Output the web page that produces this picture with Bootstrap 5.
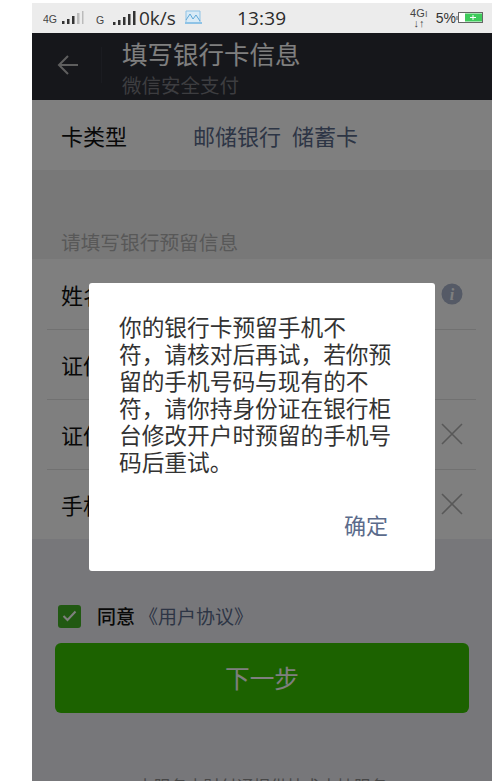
<!doctype html>
<html lang="zh"><head><meta charset="utf-8">
<link href="https://cdn.jsdelivr.net/npm/bootstrap@5.3.0/dist/css/bootstrap.min.css" rel="stylesheet">
<style>
html,body{height:781px;overflow:hidden;background:#fff}
body{font-family:"Noto Sans CJK SC","Liberation Sans",sans-serif}
.phone{width:460px;height:778px;margin:3px 0 0 32px;position:relative;overflow:hidden;background:#efeff4}
.stat{height:30px;background:#ececec;color:#333;padding:0 9px 0 11px}
.stat .net{font:400 19px/30px "Open Sans",sans-serif;color:#2f2f2f}
.stat .tm{font:400 19px/30px "Open Sans",sans-serif;color:#2a2a2a;margin-left:34px;letter-spacing:.2px}
.stat .pc{font:400 14px/1 "Liberation Sans",sans-serif;color:#333}
.stat .g4{font:400 11px/10px "Liberation Sans",sans-serif;color:#444}
.stage{height:748px;position:relative}
.top{height:67px;background:#2c2e37;color:#fff;padding-left:24px}
.top .bk{width:46px;height:36px;border-right:1px solid #363842;margin-right:20px;margin-top:-3px}
.heads{align-self:flex-start;margin-top:5px}
.ttl{font-size:25.5px;line-height:30px;color:#fff}
.sub{font-size:19.5px;line-height:30px;color:#7a7b80;margin-top:2px}
.rw{background:#fff;height:70px;font-size:22px;color:#111;padding:0 29px 0 29px}
.cardrow .bank{color:#5b6b8b;font-size:22px;margin-left:66px;word-spacing:6px}
.gap1{height:55px;background:#f0f0f0}
.hint{height:34px;padding:0 0 0 29px;background:#f0f0f0;color:#b0b0b0;font-size:19.7px;line-height:34px}
.rows{background:#fff}
.rows .rw+.rw{position:relative}
.rows .rw+.rw::before{content:"";position:absolute;left:15px;right:16px;top:0;border-top:1px solid #e2e2e2}
.gap2{height:65px}
.agr{padding-left:26px;height:24px;font-size:19px;color:#111}
.agr .lnk{color:#5b6b8b;font-size:19px;margin-left:4px}
.ck{width:23px;height:23px;border-radius:3px;background:#43b324;margin-right:16px}
.go{display:block;margin:15px 23px 0 23px;width:414px;height:70px;background:#38c400;color:#fff;font-size:24.7px;border:0;border-radius:6px}
.go:disabled{background:#38c400;color:#fff;opacity:1}
.foot{position:absolute;left:0;right:0;bottom:-17px;text-align:center;font-size:16.7px;line-height:24px;color:#8e8e8e}
.scrim{position:absolute;inset:0;background:rgba(0,0,0,.5)}
.dlg{position:absolute;left:57px;top:250px;width:346px;height:288px;background:#fff;border-radius:3px;padding:30px 30px 0 30px}
.dlg p{font-size:22.7px;line-height:27.1px;color:#333;margin:0;white-space:nowrap}
.dlg .ok{position:absolute;right:47px;bottom:32px;font-size:22px;line-height:30px;color:#5b6b8b;padding:0;border:0;background:none}
</style></head><body>
<div class="phone">
 <div class="stat d-flex align-items-center">
  <svg width="53" height="14" viewBox="0 0 53 14"><text x="0" y="12" font-family="Liberation Sans" font-size="10.500" fill="#444">4G</text><g fill="#333"><rect x="19" y="10" width="2.500" height="3"/><rect x="24" y="8" width="2.500" height="5"/><rect x="29" y="5" width="2.500" height="8"/></g><g fill="#bbb"><rect x="34" y="2" width="2.500" height="11"/><rect x="39" y="0" width="1.500" height="13"/></g></svg>
  <svg width="43" height="16" viewBox="0 0 43 16"><text x="0" y="14" font-family="Liberation Sans" font-size="10.500" fill="#444">G</text><g fill="#333"><rect x="17" y="12" width="2.500" height="3"/><rect x="22" y="10" width="2.500" height="5"/><rect x="27" y="7" width="2.500" height="8"/><rect x="32" y="4" width="2.500" height="11"/><rect x="37" y="1" width="2.500" height="14"/></g></svg>
  <span class="net">0k/s</span>
  <svg width="19" height="16" viewBox="0 0 19 16" class="ms-2"><path d="M2 1h14v12H2z" fill="#d8eaf6" stroke="#8fc3e6"/><path d="M2 10l4-6 3 5 3-4 4 6" fill="none" stroke="#5fa8d8"/><path d="M1 13h17" stroke="#8fc3e6" stroke-width="2"/></svg>
  <span class="tm">13:39</span>
  <div class="ms-auto d-flex align-items-center">
   <div class="g4 me-2 text-center"><div>4G<span class="opacity-75">ı</span></div><div>↓↑</div></div>
   <span class="pc">5%</span>
   <svg width="27" height="14" viewBox="0 0 27 14"><path d="M1 5v4" stroke="#555" stroke-width="1"/><rect x="2.500" y="1.500" width="24" height="10" fill="#fff" stroke="#666"/><rect x="9" y="2.500" width="17" height="8" fill="#3ecb5b"/><path d="M14 6.500h6M17 4v5" stroke="#fff"/></svg>
  </div>
 </div>
 <div class="stage">
  <div class="top d-flex align-items-center">
   <div class="bk d-flex align-items-center"><svg width="24" height="22" viewBox="0 0 24 22"><path d="M22 11H3M12 2l-9 9 9 9" fill="none" stroke="#bdbdbd" stroke-width="2"/></svg></div>
   <div class="heads"><div class="ttl">填写银行卡信息</div><div class="sub">微信安全支付</div></div>
  </div>
  <div class="rw cardrow d-flex align-items-center"><span>卡类型</span><span class="bank">邮储银行 储蓄卡</span></div>
  <div class="gap1"></div>
  <div class="hint">请填写银行预留信息</div>
  <div class="rows">
   <div class="rw d-flex align-items-center justify-content-between"><span>姓名</span><svg width="22" height="22" viewBox="0 0 22 22"><circle cx="11" cy="11" r="10.500" fill="#aab5cc"/><text x="11" y="17" text-anchor="middle" font-family="Liberation Serif" font-weight="700" font-style="italic" font-size="16" fill="#fff">i</text></svg></div>
   <div class="rw d-flex align-items-center"><span>证件类型</span></div>
   <div class="rw d-flex align-items-center justify-content-between"><span>证件号</span><svg width="22" height="22" viewBox="0 0 22 22"><path d="M1 1l20 20M21 1L1 21" stroke="#b0b0b0" stroke-width="1.600"/></svg></div>
   <div class="rw d-flex align-items-center justify-content-between"><span>手机号</span><svg width="22" height="22" viewBox="0 0 22 22"><path d="M1 1l20 20M21 1L1 21" stroke="#b0b0b0" stroke-width="1.600"/></svg></div>
  </div>
  <div class="gap2"></div>
  <div class="agr d-flex align-items-center">
   <span class="ck d-flex align-items-center justify-content-center"><svg width="15" height="12" viewBox="0 0 15 12"><path d="M1.500 6l4 4 8-8.500" fill="none" stroke="#fff" stroke-width="2"/></svg></span>
   <span class="fw-medium">同意</span><span class="lnk">《用户协议》</span>
  </div>
  <button class="go btn" disabled>下一步</button>
  <div class="foot">本服务由财付通提供技术支持服务</div>
  <div class="scrim"></div>
  <div class="dlg">
   <p>你的银行卡预留手机不<br>符，请核对后再试，若你预<br>留的手机号码与现有的不<br>符，请你持身份证在银行柜<br>台修改开户时预留的手机号<br>码后重试。</p>
   <button class="ok">确定</button>
  </div>
 </div>
</div>
<script src="https://cdn.jsdelivr.net/npm/bootstrap@5.3.0/dist/js/bootstrap.bundle.min.js"></script>
</body></html>
